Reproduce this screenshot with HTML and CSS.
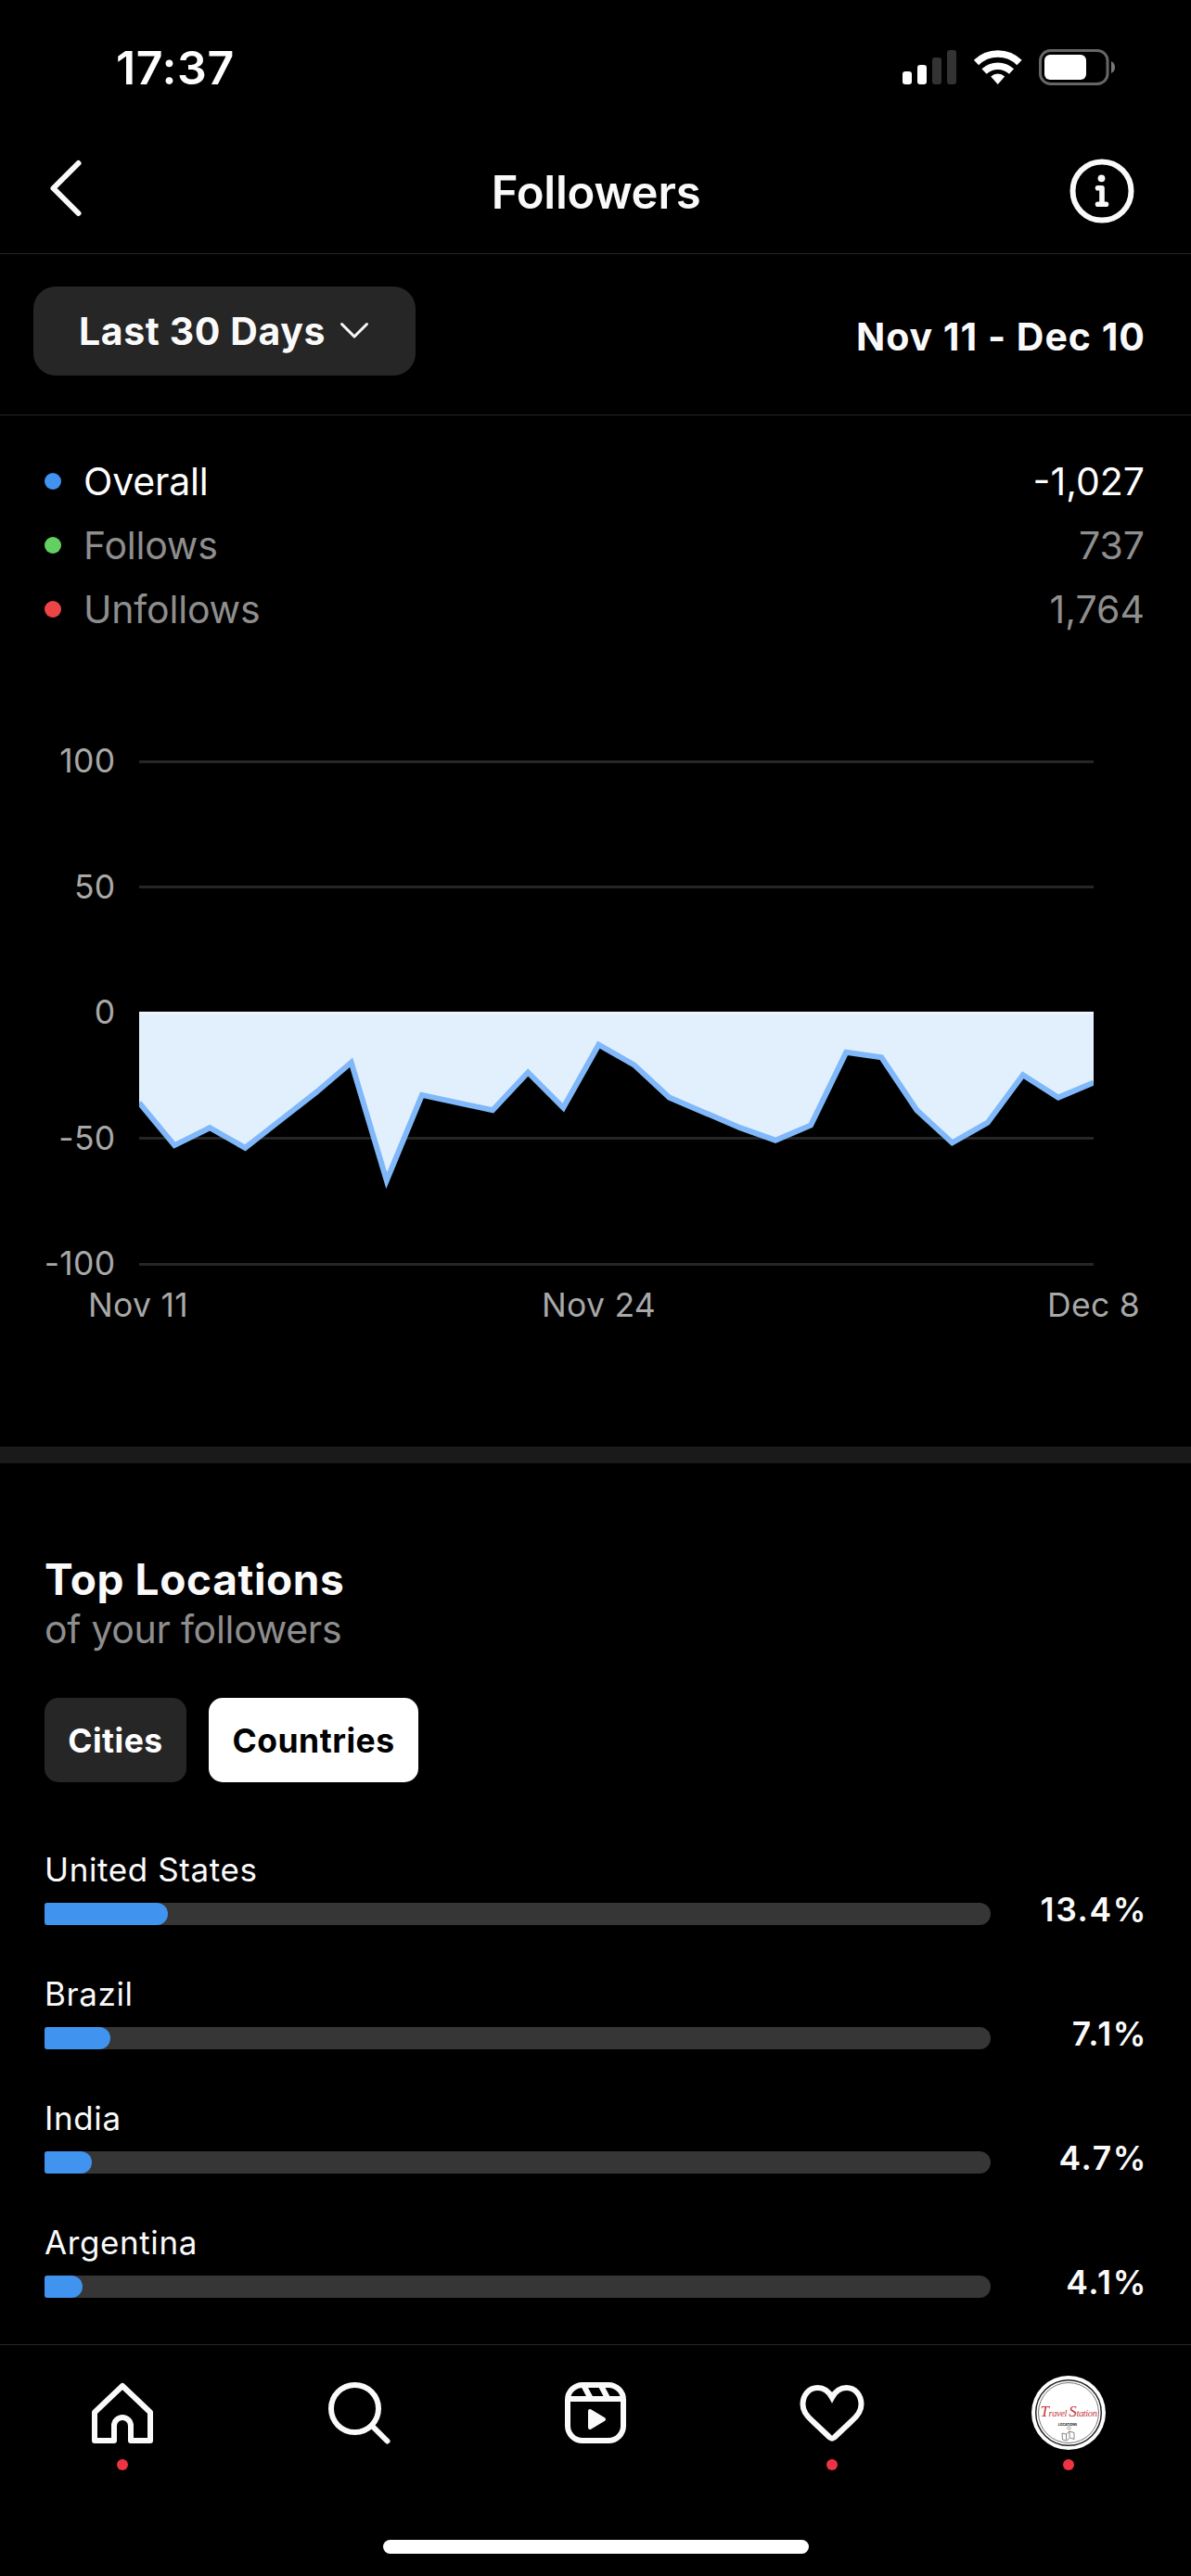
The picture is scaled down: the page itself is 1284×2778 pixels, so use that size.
FILE: index.html
```html
<!DOCTYPE html>
<html lang="en">
<head>
<meta charset="UTF-8" />
<title>Followers</title>
<link rel="stylesheet" href="styles.css">
</head>
<body>

<div class="screen">
  <div class="status-bar">
    <span class="time">17:37</span>
    <svg class="status-icons" width="232" height="42" viewBox="971 52 232 42">
      <g fill="#fff">
        <rect x="973" y="77" width="10" height="14" rx="3" />
        <rect x="989" y="70" width="10" height="21" rx="3" />
        <rect x="1005" y="62" width="10" height="29" rx="3" fill="#333" />
        <rect x="1021" y="54" width="10" height="37" rx="3" fill="#333" />
      </g>
      <!-- wifi -->
      <path d="M1052.500 67.500a33 33 0 0 1 46.500 0M1061 77a21.500 21.500 0 0 1 29.500 0" fill="none" stroke="#fff" stroke-width="7.500" />
      <path d="M1075.700 91l-7.500-8.500a11 11 0 0 1 15 0z" fill="#fff" />
      <!-- battery -->
      <rect x="1121.500" y="54.500" width="72.500" height="36" rx="11" fill="none" stroke="#666" stroke-width="3" />
      <rect x="1126" y="59" width="45" height="27" rx="6" fill="#fff" />
      <path d="M1198 66q4 2 4 6.500t-4 6.500z" fill="#777" />
    </svg>
  </div>

  <header class="header">
    <svg class="back" width="40" height="66" viewBox="0 0 40 66">
      <path d="M33.500 6L6.500 33L33.500 60" fill="none" stroke="#fafafa" stroke-width="6" stroke-linecap="round" stroke-linejoin="round" />
    </svg>
    <h1>Followers</h1>
    <svg class="info" width="70" height="70" viewBox="0 0 70 70">
      <circle cx="35" cy="35" r="31.500" fill="none" stroke="#fafafa" stroke-width="6" />
      <circle cx="34.500" cy="21.300" r="3.900" fill="#fafafa" />
      <path d="M30.500 31.700H35V49M30.500 49.300H39.500" fill="none" stroke="#fafafa" stroke-width="5.600" stroke-linecap="round" stroke-linejoin="round" />
    </svg>
  </header>

  <div class="filter">
    <button class="range">
      Last 30 Days
      <svg width="32" height="20" viewBox="0 0 32 20">
        <path d="M2.500 2.500L16 16L29.500 2.500" fill="none" stroke="#fafafa" stroke-width="3" stroke-linecap="round" stroke-linejoin="round" />
      </svg>
    </button>
    <span class="dates">Nov 11 - Dec 10</span>
  </div>

  <ul class="legend">
    <li class="active"><i class="dot blue"></i><span>Overall</span><b>-1,027</b></li>
    <li><i class="dot green"></i><span>Follows</span><b>737</b></li>
    <li><i class="dot red"></i><span>Unfollows</span><b>1,764</b></li>
  </ul>

  <svg class="chart" width="1284" height="869" viewBox="0 691 1284 869">
    <g class="grid">
      <path d="M150 821.500H1179M150 956.500H1179M150 1227.500H1179M150 1363.500H1179" />
    </g>
    <path class="area" id="area" />
    <path class="zero" d="M150 1092.500H1179" />
    <svg x="150" y="1091" width="1029" height="272" viewBox="150 1091 1029 272">
      <path class="line" id="line" />
    </svg>
    <g class="y-labels">
      <text x="124.500" y="833">100</text>
      <text x="124.500" y="968.500">50</text>
      <text x="124.500" y="1104">0</text>
      <text x="124.500" y="1239.500">-50</text>
      <text x="124.500" y="1375">-100</text>
    </g>
    <g class="x-labels">
      <text x="149" y="1420">Nov 11</text>
      <text x="645.500" y="1420">Nov 24</text>
      <text x="1179" y="1420">Dec 8</text>
    </g>
  </svg>

  <section class="locations">
    <h2>Top Locations</h2>
    <p class="sub">of your followers</p>
    <div class="tabs">
      <button class="tab">Cities</button>
      <button class="tab selected">Countries</button>
    </div>
    <div class="rows">
      <div class="row">
        <div class="place"><span>United States</span><div class="track"><div class="fill" style="width: 13%"></div></div></div>
        <span class="pct">13.4%</span>
      </div>
      <div class="row">
        <div class="place"><span>Brazil</span><div class="track"><div class="fill" style="width: 7%"></div></div></div>
        <span class="pct">7.1%</span>
      </div>
      <div class="row">
        <div class="place"><span>India</span><div class="track"><div class="fill" style="width: 5%"></div></div></div>
        <span class="pct">4.7%</span>
      </div>
      <div class="row">
        <div class="place"><span>Argentina</span><div class="track"><div class="fill" style="width: 4%"></div></div></div>
        <span class="pct">4.1%</span>
      </div>
    </div>
  </section>

  <nav class="nav">
    <div class="tabs-bar">
      <div class="item">
        <svg width="80" height="80" viewBox="0 0 80 80">
          <path d="M40 11L70 39.500V70H49V54a9 9 0 0 0-18 0V70H10V39.500Z" fill="none" stroke="#fafafa" stroke-width="6" stroke-linejoin="round" />
        </svg>
        <i class="badge"></i>
      </div>
      <div class="item">
        <svg width="80" height="80" viewBox="0 0 80 80">
          <circle cx="35.500" cy="35.500" r="25.500" fill="none" stroke="#fafafa" stroke-width="6" />
          <path d="M54 54L70.500 70.500" stroke="#fafafa" stroke-width="6" stroke-linecap="round" />
        </svg>
      </div>
      <div class="item">
        <svg width="80" height="80" viewBox="0 0 80 80" fill="none" stroke="#fafafa" stroke-width="6">
          <rect x="10" y="10" width="60" height="60" rx="16" />
          <path d="M10 25H70M27 10L35 25M45.500 10L53.500 25" />
          <path d="M34 38V56L49 47Z" fill="#fafafa" stroke-width="4" stroke-linejoin="round" />
        </svg>
      </div>
      <div class="item">
        <svg width="80" height="80" viewBox="0 0 80 80">
          <path d="M40 23.500C36.500 17 31 13 24.500 13C15 13 8.500 21 8.500 31C8.500 38.500 12.500 43.500 19 49L37.500 66.500Q40 69 42.500 66.500L61 49C67.500 43.500 71.500 38.500 71.500 31C71.500 21 65 13 55.500 13C49 13 43.500 17 40 23.500Z" fill="none" stroke="#fafafa" stroke-width="6" />
        </svg>
        <i class="badge"></i>
      </div>
      <div class="item">
        <svg class="avatar" width="80" height="80" viewBox="0 0 80 80">
          <circle cx="40" cy="40" r="40" fill="#fff" />
          <circle cx="40" cy="40" r="35.300" fill="none" stroke="#222" stroke-width="1.500" />
          <circle cx="40" cy="40" r="32.500" fill="none" stroke="#555" stroke-width="0.800" />
          <text class="brand" x="40" y="43.500"><tspan class="cap">T</tspan>ravel <tspan class="cap">S</tspan>tation</text>
          <text class="brand-sub" x="39" y="53.500">LOCATIONS</text>
          <path d="M33 62l4.500 1 3.500-3 5 1.500v7l-4.500-1.500-3.500 3-4.500-1zM37.500 63v6M41 60v6.500" fill="none" stroke="#555" stroke-width="0.700" />
          <circle cx="40.500" cy="56.500" r="1.700" fill="none" stroke="#777" stroke-width="0.700" />
        </svg>
        <i class="badge"></i>
      </div>
    </div>
    <div class="home-indicator"></div>
  </nav>
</div>

<script src="chart.js"></script>
</body>
</html>
```
FILE: styles.css
```css
* {
  box-sizing: border-box;
}
body {
  margin: 0;
  background: #000;
  color: #fafafa;
  font-family: Inter, "Liberation Sans", sans-serif;
}
h1, h2, p, ul {
  margin: 0;
  padding: 0;
}
button {
  border: none;
  font-family: inherit;
  color: inherit;
}
svg {
  display: block;
}
.screen {
  width: 1284px;
  height: 2778px;
  display: flex;
  flex-direction: column;
  overflow: hidden;
}

/* Status bar */
.status-bar {
  height: 146px;
  padding: 0 81px 0 125px;
  display: flex;
  align-items: center;
  justify-content: space-between;
}
.time {
  font-size: 50px;
  font-weight: 600;
  letter-spacing: 0.6px;
  color: #fff;
}

/* Header */
.header {
  height: 128px;
  padding: 0 61px 7px 51px;
  display: grid;
  grid-template-columns: 80px 1fr 80px;
  align-items: center;
  border-bottom: 1px solid #262626;
}
.header h1 {
  text-align: center;
  font-size: 49px;
  line-height: 60px;
  font-weight: 600;
  letter-spacing: -0.2px;
  margin: 3px 0 0 11px;
}
.back {
  margin-bottom: 7px;
}
.info {
  justify-self: end;
}

/* Date filter */
.filter {
  height: 174px;
  padding: 35px 50px 42px 36px;
  display: flex;
  justify-content: space-between;
  border-bottom: 1px solid #262626;
}
.range {
  width: 412px;
  height: 96px;
  padding: 0 50px 0 49px;
  display: flex;
  align-items: center;
  justify-content: space-between;
  white-space: nowrap;
  background: #262626;
  border-radius: 24px;
  font-size: 41px;
  font-weight: 700;
  letter-spacing: 0.6px;
}
.dates {
  margin-right: -1px;
  font-size: 41px;
  line-height: 108px;
  font-weight: 700;
  letter-spacing: 1px;
}

/* Legend */
.legend {
  list-style: none;
  padding: 36px 50px 0 48px;
}
.legend li {
  height: 69px;
  display: flex;
  align-items: center;
  font-size: 41px;
  color: #8e8e8e;
}
.legend li.active {
  color: #fff;
}
.legend span {
  letter-spacing: -0.2px;
}
.legend b {
  margin-left: auto;
  font-weight: 400;
}
.dot {
  width: 18px;
  height: 18px;
  margin-right: 24px;
  border-radius: 50%;
}
.blue {
  background: #4093ef;
}
.green {
  background: #62d162;
}
.red {
  background: #ed4545;
}

/* Chart */
.chart {
  flex: none;
}
.grid path {
  stroke: #262626;
  stroke-width: 3;
}
.area {
  fill: #e2f0fe;
}
.zero {
  stroke: #eef5ff;
  stroke-width: 3;
}
.line {
  fill: none;
  stroke: #80b8fa;
  stroke-width: 6;
  stroke-miterlimit: 10;
}
.chart text {
  font-size: 35.5px;
  letter-spacing: 0.3px;
  fill: #a8a8a8;
}
.y-labels {
  text-anchor: end;
}
.x-labels {
  text-anchor: middle;
}

/* Top locations */
.locations {
  flex: 1;
  border-top: 18px solid #1a1a1a;
  padding: 99px 50px 0 48px;
}
.locations h2 {
  font-size: 46px;
  line-height: 52px;
  font-weight: 700;
  letter-spacing: 0.6px;
}
.sub {
  font-size: 41px;
  line-height: 56px;
  letter-spacing: -0.3px;
  color: #8e8e8e;
}
.tabs {
  display: flex;
  gap: 24px;
  margin-top: 46px;
}
.tab {
  width: 153px;
  height: 91px;
  padding: 2px 0 0;
  border-radius: 15px;
  background: #262626;
  color: #fff;
  font-size: 35.5px;
  font-weight: 700;
  letter-spacing: 0.5px;
}
.tab.selected {
  width: 226px;
  background: #fff;
  color: #000;
}
.rows {
  display: flex;
  flex-direction: column;
  gap: 54px;
  margin-top: 74px;
}
.row {
  display: flex;
  align-items: flex-end;
  justify-content: space-between;
}
.place {
  width: 1020px;
  font-size: 35px;
  line-height: 40px;
  letter-spacing: 0.6px;
}
.place span {
  display: block;
}
.track {
  height: 24px;
  margin-top: 16px;
  background: #363636;
  border-radius: 3px 12px 12px 3px;
}
.fill {
  height: 24px;
  background: #4093ef;
  border-radius: 3px 12px 12px 3px;
}
.pct {
  margin-right: -3px;
  font-size: 35.5px;
  line-height: 32px;
  font-weight: 600;
  letter-spacing: 1.6px;
}

/* Bottom navigation */
.nav {
  height: 250px;
  border-top: 1px solid #262626;
  padding: 33px 4px 0;
}
.tabs-bar {
  display: grid;
  grid-template-columns: repeat(5, 255px);
  height: 102px;
}
.item {
  display: flex;
  flex-direction: column;
  align-items: center;
  gap: 10px;
}
.badge {
  width: 12px;
  height: 12px;
  border-radius: 50%;
  background: #ed3440;
}
.avatar {
  overflow: visible;
}
.brand {
  font: italic 10.5px "Liberation Serif", serif;
  letter-spacing: -0.4px;
  fill: #c4383c;
  text-anchor: middle;
}
.brand .cap {
  font-size: 17px;
}
.brand-sub {
  font-size: 3.5px;
  font-weight: 700;
  fill: #111;
  text-anchor: middle;
}
.home-indicator {
  width: 459px;
  height: 15px;
  margin: 75px 0 0 409px;
  border-radius: 8px;
  background: #fff;
}
```
FILE: chart.js
```js
const values = [-36, -53, -46, -54, -43, -32, -20, -67, -33, -36, -39, -24, -38, -13,
  -21, -34, -40, -46, -51, -45, -16, -18, -39, -52, -44, -25, -34, -28];
const left = 150;
const right = 1179;
const zeroY = 1091.5;

const points = values.map((v, i) => {
  const x = left + i * (right - left) / (values.length - 1);
  return x.toFixed(1) + " " + (zeroY - v * 2.71).toFixed(1);
});

document.getElementById("line").setAttribute("d", "M" + points.join("L"));
document.getElementById("area").setAttribute("d",
  "M" + left + " 1091L" + points.join("L") + "L" + right + " 1091Z");
```
